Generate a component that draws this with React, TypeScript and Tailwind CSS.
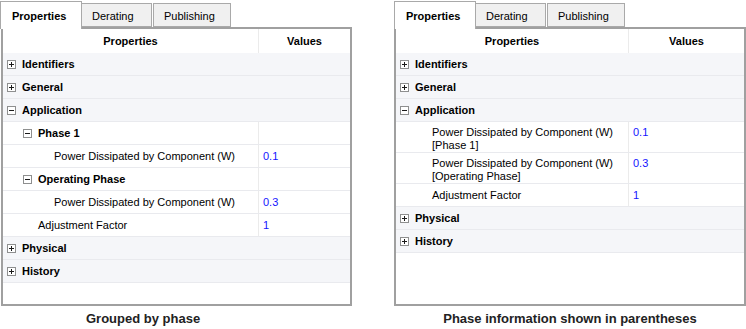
import React from "react";

type Row =
  | { kind: "cat"; label: string; open: boolean }
  | { kind: "sub"; label: string }
  | { kind: "leaf"; label: string; value: string; indent: number; lines?: string[] };

function Toggle({ open }: { open: boolean }) {
  return (
    <svg width="9" height="9" viewBox="0 0 9 9" className="shrink-0">
      <rect x="0.5" y="0.5" width="8" height="8" fill="#ffffff" stroke="#8e8f8f" />
      <line x1="2" y1="4.5" x2="7" y2="4.5" stroke="#1a1a1a" strokeWidth="1" />
      {!open && <line x1="4.5" y1="2" x2="4.5" y2="7" stroke="#1a1a1a" strokeWidth="1" />}
    </svg>
  );
}

function Tabs() {
  return (
    <div className="flex h-[27px] items-end font-['Liberation_Sans',sans-serif] text-[11px] leading-[13px] text-black">
      <div className="relative z-10 -mb-[2px] h-[28px] w-[82px] border border-b-0 border-[#a9a9a9] bg-white pl-[11px] pt-[8px] font-bold">
        Properties
      </div>
      <div className="h-[24px] w-[70px] border border-l-0 border-[#a9a9a9] bg-[#f0f0f0] pl-[10px] pt-[6px]">
        Derating
      </div>
      <div className="ml-[1px] h-[24px] w-[78px] border border-[#a9a9a9] bg-[#f0f0f0] pl-[10px] pt-[6px]">
        Publishing
      </div>
    </div>
  );
}

function Grid({ rows, col1 }: { rows: Row[]; col1: number }) {
  return (
    <div className="flex h-[279px] flex-col border-2 border-[#a0a0a0] bg-white font-['Liberation_Sans',sans-serif] text-[11px] text-black">
      <div className="flex h-[24px] shrink-0 items-center font-bold">
        <div className="flex h-full items-center justify-center border-r border-[#ebebeb]" style={{ width: col1 + 1 }}>
          Properties
        </div>
        <div className="flex h-full flex-1 items-center justify-center">Values</div>
      </div>
      {rows.map((r, i) => {
        if (r.kind === "cat") {
          return (
            <div key={i} className="flex h-[23px] shrink-0 items-center border-b border-[#e9eaee] bg-[#f5f6f9] pl-[4px] font-bold">
              <Toggle open={r.open} />
              <span className="ml-[6px]">{r.label}</span>
            </div>
          );
        }
        if (r.kind === "sub") {
          return (
            <div key={i} className="flex h-[23px] shrink-0 border-b border-[#e9eaee] font-bold">
              <div className="flex h-full items-center border-r border-[#ebebeb] pl-[20px]" style={{ width: col1 + 1 }}>
                <Toggle open={true} />
                <span className="ml-[6px]">{r.label}</span>
              </div>
              <div className="flex-1" />
            </div>
          );
        }
        if (r.lines) {
          return (
            <div key={i} className="flex h-[31px] shrink-0 border-b border-[#e9eaee] leading-[13px]">
              <div className="h-full border-r border-[#ebebeb] pt-[4px]" style={{ width: col1 + 1, paddingLeft: r.indent }}>
                {r.lines.map((l, j) => (
                  <div key={j}>{l}</div>
                ))}
              </div>
              <div className="flex-1 pl-[4px] pt-[4px] text-[#1414ff]">{r.value}</div>
            </div>
          );
        }
        return (
          <div key={i} className="flex h-[23px] shrink-0 border-b border-[#e9eaee]">
            <div className="flex h-full items-center border-r border-[#ebebeb]" style={{ width: col1 + 1, paddingLeft: r.indent }}>
              {r.label}
            </div>
            <div className="flex h-full flex-1 items-center pl-[4px] text-[#1414ff]">{r.value}</div>
          </div>
        );
      })}
    </div>
  );
}

const leftRows: Row[] = [
  { kind: "cat", label: "Identifiers", open: false },
  { kind: "cat", label: "General", open: false },
  { kind: "cat", label: "Application", open: true },
  { kind: "sub", label: "Phase 1" },
  { kind: "leaf", label: "Power Dissipated by Component (W)", value: "0.1", indent: 51 },
  { kind: "sub", label: "Operating Phase" },
  { kind: "leaf", label: "Power Dissipated by Component (W)", value: "0.3", indent: 51 },
  { kind: "leaf", label: "Adjustment Factor", value: "1", indent: 35 },
  { kind: "cat", label: "Physical", open: false },
  { kind: "cat", label: "History", open: false },
];

const rightRows: Row[] = [
  { kind: "cat", label: "Identifiers", open: false },
  { kind: "cat", label: "General", open: false },
  { kind: "cat", label: "Application", open: true },
  { kind: "leaf", label: "", value: "0.1", indent: 36, lines: ["Power Dissipated by Component (W)", "[Phase 1]"] },
  { kind: "leaf", label: "", value: "0.3", indent: 36, lines: ["Power Dissipated by Component (W)", "[Operating Phase]"] },
  { kind: "leaf", label: "Adjustment Factor", value: "1", indent: 36 },
  { kind: "cat", label: "Physical", open: false },
  { kind: "cat", label: "History", open: false },
];

export default function App() {
  return (
    <div className="flex h-[329px] w-[746px] bg-white">
      <div className="flex w-[352px] flex-col">
        <Tabs />
        <div className="ml-[1px] w-[351px]">
          <Grid rows={leftRows} col1={255} />
        </div>
        <div className="mt-[5px] pl-[86px] font-['Liberation_Sans',sans-serif] text-[13px] font-bold leading-[15px] text-[#222]">
          Grouped by phase
        </div>
      </div>
      <div className="ml-[42px] flex w-[352px] flex-col">
        <Tabs />
        <Grid rows={rightRows} col1={232} />
        <div className="mt-[5px] text-center font-['Liberation_Sans',sans-serif] text-[13px] font-bold leading-[15px] text-[#222]">
          Phase information shown in parentheses
        </div>
      </div>
    </div>
  );
}
